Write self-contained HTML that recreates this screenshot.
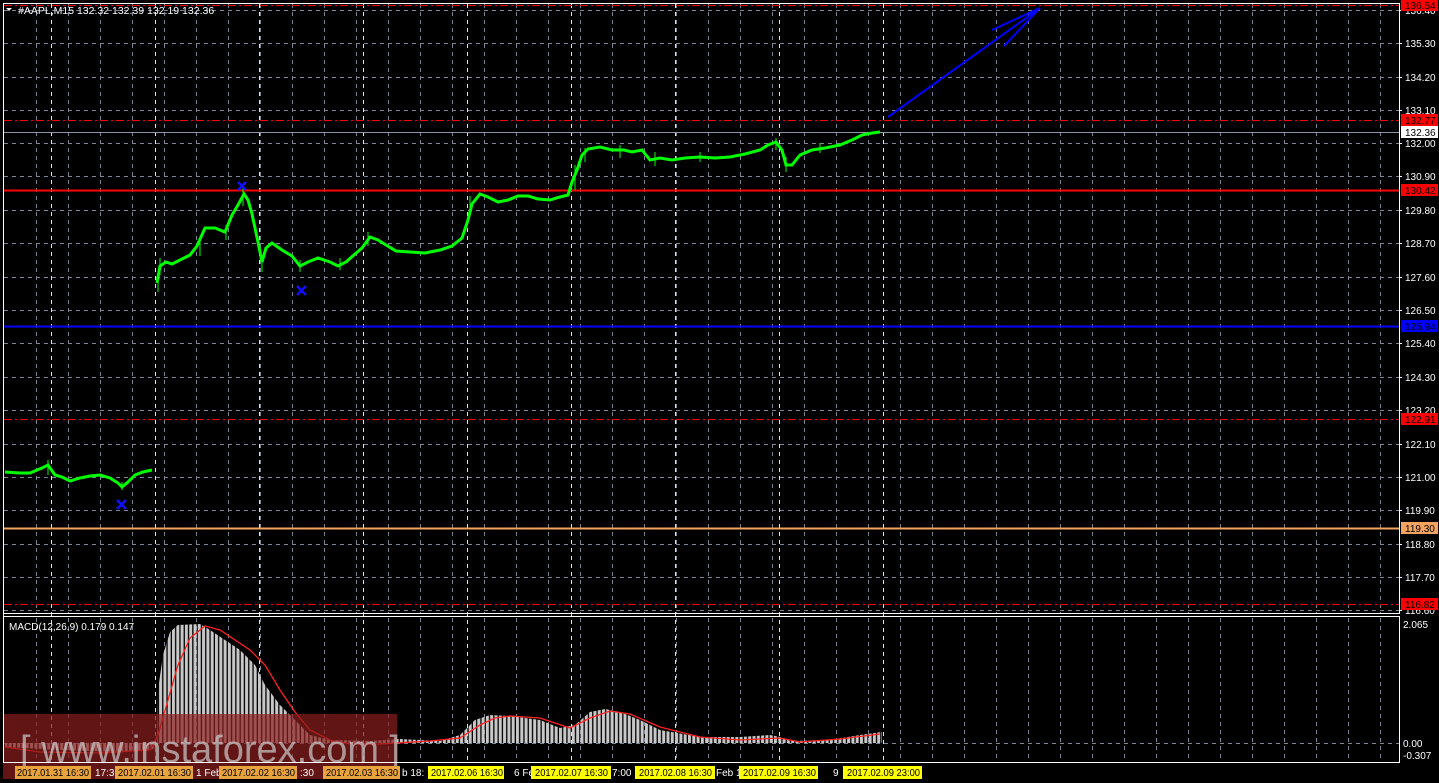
<!DOCTYPE html>
<html><head><meta charset="utf-8"><style>
html,body{margin:0;padding:0;background:#000;width:1439px;height:783px;overflow:hidden;font-family:"Liberation Sans",sans-serif}
</style></head><body>
<svg width="1439" height="783" xmlns="http://www.w3.org/2000/svg" style="position:absolute;left:0;top:0" font-family="Liberation Sans, sans-serif">
<defs>
<pattern id="bars" x="0" y="0" width="4.3" height="10" patternUnits="userSpaceOnUse">
<rect x="0" y="0" width="3" height="10" fill="#c8c8c8"/>
</pattern>
</defs>
<rect width="1439" height="783" fill="#000"/>
<g stroke="#7a8595" stroke-dasharray="4,4" stroke-width="1">
<line x1="4" y1="10.5" x2="1399" y2="10.5"/><line x1="4" y1="43.5" x2="1399" y2="43.5"/>
<line x1="4" y1="77.5" x2="1399" y2="77.5"/><line x1="4" y1="110.5" x2="1399" y2="110.5"/>
<line x1="4" y1="143.5" x2="1399" y2="143.5"/><line x1="4" y1="176.5" x2="1399" y2="176.5"/>
<line x1="4" y1="210.5" x2="1399" y2="210.5"/><line x1="4" y1="243.5" x2="1399" y2="243.5"/>
<line x1="4" y1="277.5" x2="1399" y2="277.5"/><line x1="4" y1="310.5" x2="1399" y2="310.5"/>
<line x1="4" y1="343.5" x2="1399" y2="343.5"/><line x1="4" y1="377.5" x2="1399" y2="377.5"/>
<line x1="4" y1="410.5" x2="1399" y2="410.5"/><line x1="4" y1="444.5" x2="1399" y2="444.5"/>
<line x1="4" y1="477.5" x2="1399" y2="477.5"/><line x1="4" y1="510.5" x2="1399" y2="510.5"/>
<line x1="4" y1="544.5" x2="1399" y2="544.5"/><line x1="4" y1="577.5" x2="1399" y2="577.5"/>
<line x1="4" y1="610.5" x2="1399" y2="610.5"/>
<line x1="4" y1="743.5" x2="1399" y2="743.5"/>
</g>
<g stroke="#7a8595" stroke-dasharray="4,4" stroke-width="1">
<path d="M36.5 4V613M68.5 4V613M100.5 4V613M132.5 4V613M164.5 4V613M196.5 4V613M228.5 4V613M260.5 4V613M292.5 4V613M324.5 4V613M356.5 4V613M388.5 4V613M420.5 4V613M452.5 4V613M484.5 4V613M516.5 4V613M548.5 4V613M580.5 4V613M612.5 4V613M644.5 4V613M676.5 4V613M708.5 4V613M740.5 4V613M772.5 4V613M804.5 4V613M836.5 4V613M868.5 4V613M900.5 4V613M932.5 4V613M964.5 4V613M996.5 4V613M1028.5 4V613M1060.5 4V613M1092.5 4V613M1124.5 4V613M1156.5 4V613M1188.5 4V613M1220.5 4V613M1252.5 4V613M1284.5 4V613M1316.5 4V613M1348.5 4V613M1380.5 4V613"/>
<path d="M36.5 618V762M68.5 618V762M100.5 618V762M132.5 618V762M164.5 618V762M196.5 618V762M228.5 618V762M260.5 618V762M292.5 618V762M324.5 618V762M356.5 618V762M388.5 618V762M420.5 618V762M452.5 618V762M484.5 618V762M516.5 618V762M548.5 618V762M580.5 618V762M612.5 618V762M644.5 618V762M676.5 618V762M708.5 618V762M740.5 618V762M772.5 618V762M804.5 618V762M836.5 618V762M868.5 618V762M900.5 618V762M932.5 618V762M964.5 618V762M996.5 618V762M1028.5 618V762M1060.5 618V762M1092.5 618V762M1124.5 618V762M1156.5 618V762M1188.5 618V762M1220.5 618V762M1252.5 618V762M1284.5 618V762M1316.5 618V762M1348.5 618V762M1380.5 618V762"/>
</g>
<g stroke="#ffff00" stroke-dasharray="4,4" stroke-width="1">
<path d="M51.5 4V762M155.5 4V762M259.5 4V762M363.5 4V762M467.5 4V762M571.5 4V762M675.5 4V762M779.5 4V762M883.5 4V762"/>
<path d="M3.5 4V762" stroke-dasharray="none"/>
</g>
<line x1="4" y1="5.5" x2="1399" y2="5.5" stroke="#ff0000" stroke-dasharray="8,3,2,3"/>
<line x1="4" y1="120.5" x2="1399" y2="120.5" stroke="#ff0000" stroke-dasharray="8,3,2,3"/>
<line x1="4" y1="132.5" x2="1399" y2="132.5" stroke="#8a96a6"/>
<line x1="4" y1="190.5" x2="1399" y2="190.5" stroke="#ff0000" stroke-width="2"/>
<line x1="4" y1="326.5" x2="1399" y2="326.5" stroke="#0000ff" stroke-width="2"/>
<line x1="4" y1="419.5" x2="1399" y2="419.5" stroke="#ff0000" stroke-dasharray="8,3,2,3"/>
<line x1="4" y1="528.5" x2="1399" y2="528.5" stroke="#f4a460" stroke-width="2"/>
<line x1="4" y1="604.5" x2="1399" y2="604.5" stroke="#ff0000" stroke-dasharray="8,3,2,3"/>
<g fill="none" stroke="#00ff00" stroke-linejoin="miter">
<polyline stroke-width="3" points="5,472 20,473 30,473 42,468 48,465 55,475 62,477 70,481 80,478 90,476 100,475 110,478 118,483 122,487 128,482 135,475 143,472 152,470"/>
<polyline stroke-width="3" points="157,283 160,266 166,262 172,264 180,260 190,255 197,246 205,228 215,228 225,232 232,215 238,205 244,194 248,200 252,214 258,242 262,262 266,248 272,243 282,250 292,256 300,266 308,262 318,258 330,262 338,266 346,262 355,254 362,248 370,237 378,240 386,245 396,251 410,252 425,253 440,250 452,246 462,238 468,220 472,204 480,194 488,197 498,202 508,200 518,196 528,196 538,199 550,200 560,197 568,195 572,182 577,170 582,155 588,149 600,147 612,150 624,150 632,152 642,150 650,160 660,158 672,160 685,158 700,157 715,158 730,157 745,154 760,150 768,145 776,142 782,150 786,165 792,165 800,155 812,150 825,148 840,145 852,140 862,135 872,133 880,132"/>
</g>
<g stroke="#00ff00" stroke-width="1">
<path d="M158 277V292M160 258V275M243 185V206M262 255V272M300 260V272M368 232V246M470 196V215M575 165V190M585 148V162M776 138V150M786 157V172M48 460V475M122 482V490M200 240V256M226 225V240M340 258V270M620 145V158M655 152V166M700 152V162M820 143V153"/>
</g>
<g stroke="#1010ff" stroke-width="2.5">
<path d="M238 182L246 190M246 182L238 190"/>
<path d="M297 286L306 295M306 286L297 295"/>
<path d="M117 500L126 509M126 500L117 509"/>
</g>
<g stroke="#0000ff" stroke-width="2" fill="none">
<path d="M888 117L1040 8M1040 8L992 30M1040 8L1004 46"/>
</g>
<polygon fill="url(#bars)" points="5,743 5,747 60,750 120,752 155,749 157,743 158,690 163,655 170,632 178,625 200,624 210,630 225,640 240,650 255,665 265,685 280,705 295,720 310,735 330,740 370,741 400,739 440,741 460,735 475,720 490,715 510,716 540,720 560,728 575,725 590,712 605,709 620,712 640,720 660,730 700,737 740,737 770,735 780,737 790,741 830,740 860,735 882,732 882,743"/>
<polyline fill="none" stroke="#ff2020" stroke-width="1.3" points="5,747 40,752 100,753 150,750 158,735 168,700 178,665 190,638 205,626 220,630 250,650 265,665 280,690 295,712 310,730 330,740 350,744 380,744 430,741 460,738 480,725 495,718 510,716 540,718 570,728 590,718 610,711 630,714 660,727 700,737 740,740 780,738 800,742 840,739 880,734"/>
<text x="9" y="630" fill="#fff" font-size="10">MACD(12,26,9) 0.179 0.147</text>
<rect x="3" y="714" width="394" height="65" fill="rgb(140,30,30)" fill-opacity="0.7"/>
<text x="20" y="762" fill="#cccccc" fill-opacity="0.7" font-size="38">[ www.instaforex.com ]</text>
<g fill="none" stroke="#fff" stroke-width="1">
<rect x="3.5" y="3.5" width="1396" height="610"/>
<rect x="3.5" y="616.5" width="1396" height="146"/>
</g>
<path d="M6 8L12 8L9 11Z" fill="#fff"/>
<text x="18" y="14" fill="#fff" font-size="10.5">#AAPL,M15  132.32 132.39 132.19 132.36</text>
<g fill="#fff" font-size="10">
<text x="1405" y="14">136.40</text><text x="1405" y="47">135.30</text><text x="1405" y="81">134.20</text>
<text x="1405" y="114">133.10</text><text x="1405" y="147">132.00</text><text x="1405" y="180">130.90</text>
<text x="1405" y="214">129.80</text><text x="1405" y="247">128.70</text><text x="1405" y="281">127.60</text>
<text x="1405" y="314">126.50</text><text x="1405" y="347">125.40</text><text x="1405" y="381">124.30</text>
<text x="1405" y="414">123.20</text><text x="1405" y="448">122.10</text><text x="1405" y="481">121.00</text>
<text x="1405" y="514">119.90</text><text x="1405" y="548">118.80</text><text x="1405" y="581">117.70</text>
<text x="1405" y="614">116.60</text>
<text x="1403" y="628">2.065</text><text x="1403" y="747">0.00</text><text x="1403" y="759">-0.307</text>
</g>
<g stroke="#fff"><path d="M1399 10.5h3M1399 43.5h3M1399 77.5h3M1399 110.5h3M1399 143.5h3M1399 176.5h3M1399 210.5h3M1399 243.5h3M1399 277.5h3M1399 310.5h3M1399 343.5h3M1399 377.5h3M1399 410.5h3M1399 444.5h3M1399 477.5h3M1399 510.5h3M1399 544.5h3M1399 577.5h3M1399 610.5h3"/></g>
<rect x="1401" y="0" width="37" height="11" fill="#ff0000"/><text x="1405" y="9" fill="#000" font-size="10">136.54</text>
<rect x="1401" y="114" width="37" height="12" fill="#ff0000"/><text x="1405" y="124" fill="#000" font-size="10">132.77</text>
<rect x="1401" y="126" width="37" height="12" fill="#fff"/><text x="1405" y="136" fill="#000" font-size="10">132.36</text>
<rect x="1401" y="184" width="37" height="12" fill="#ff0000"/><text x="1405" y="194" fill="#000" font-size="10">130.42</text>
<rect x="1401" y="320" width="37" height="12" fill="#0000ff"/><text x="1405" y="330" fill="#000" font-size="10">125.94</text>
<rect x="1401" y="413" width="37" height="12" fill="#ff0000"/><text x="1405" y="423" fill="#000" font-size="10">122.91</text>
<rect x="1401" y="522" width="37" height="12" fill="#f4a460"/><text x="1405" y="532" fill="#000" font-size="10">119.30</text>
<rect x="1401" y="598" width="37" height="12" fill="#ff0000"/><text x="1405" y="608" fill="#000" font-size="10">116.82</text>
<g font-size="10" fill="#fff">
<text x="95" y="776">17:30</text><text x="196" y="776">1 Feb</text><text x="300" y="776">:30</text><text x="402" y="776">b 18:</text>
<text x="514" y="776">6 Fe</text><text x="612" y="776">7:00</text><text x="716" y="776">Feb 1</text><text x="833" y="776">9</text>
</g>
<g font-size="10" fill="#000">
<rect x="15" y="766" width="76" height="13" fill="#e8a33c"/><text x="17" y="776" textLength="72" lengthAdjust="spacingAndGlyphs">2017.01.31 16:30</text>
<rect x="115" y="766" width="78" height="13" fill="#e8a33c"/><text x="118" y="776" textLength="73" lengthAdjust="spacingAndGlyphs">2017.02.01 16:30</text>
<rect x="219" y="766" width="78" height="13" fill="#e8a33c"/><text x="222" y="776" textLength="73" lengthAdjust="spacingAndGlyphs">2017.02.02 16:30</text>
<rect x="323" y="766" width="77" height="13" fill="#e8a33c"/><text x="326" y="776" textLength="72" lengthAdjust="spacingAndGlyphs">2017.02.03 16:30</text>
<rect x="428" y="766" width="76" height="13" fill="#ffff00"/><text x="431" y="776" textLength="72" lengthAdjust="spacingAndGlyphs">2017.02.06 16:30</text>
<rect x="531" y="766" width="80" height="13" fill="#ffff00"/><text x="535" y="776" textLength="73" lengthAdjust="spacingAndGlyphs">2017.02.07 16:30</text>
<rect x="635" y="766" width="80" height="13" fill="#ffff00"/><text x="639" y="776" textLength="73" lengthAdjust="spacingAndGlyphs">2017.02.08 16:30</text>
<rect x="739" y="766" width="79" height="13" fill="#ffff00"/><text x="743" y="776" textLength="73" lengthAdjust="spacingAndGlyphs">2017.02.09 16:30</text>
<rect x="843" y="766" width="79" height="13" fill="#ffff00"/><text x="847" y="776" textLength="73" lengthAdjust="spacingAndGlyphs">2017.02.09 23:00</text>
</g>
</svg>
</body></html>
